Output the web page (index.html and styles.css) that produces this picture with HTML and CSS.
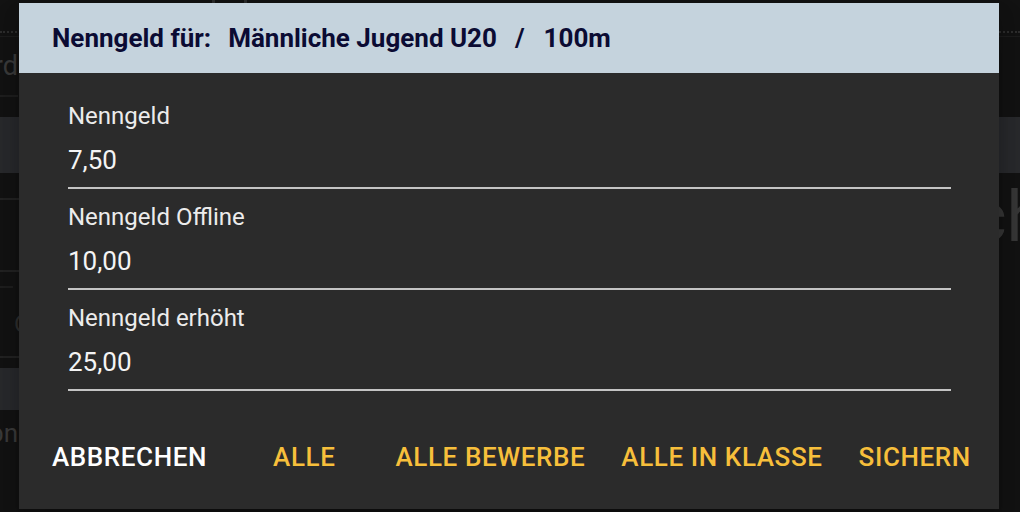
FILE: index.html
```html
<!DOCTYPE html>
<html lang="de">
<head>
  <meta charset="UTF-8">
  <meta name="viewport" content="width=device-width, initial-scale=1.0">
  <title>Nenngeld</title>
  <link rel="stylesheet" href="styles.css">
</head>
<body>
  <div class="page">
    <div class="topbar">
      <div class="topbar-item"></div>
      <div class="topbar-item sep"></div>
      <div class="topbar-item sep"></div>
    </div>
    <div class="search-row">
      <div class="search-text">Keyword</div>
    </div>
    <div class="band"></div>
    <div class="content">
      <div class="list">
        <div class="list-row first"></div>
        <div class="list-row"></div>
        <div class="list-row short"></div>
        <div class="list-row icon-row"><span class="row-icon">O</span></div>
        <div class="list-band"></div>
        <div class="list-text">Ergebn</div>
      </div>
      <div class="title-row">
        <div class="title">Übersicht</div>
      </div>
    </div>
  </div>

  <div class="dialog">
    <div class="dialog-title">
      <span>Nenngeld für:</span>
      <span class="title-part">Männliche Jugend U20</span>
      <span class="title-slash">/</span>
      <span>100m</span>
    </div>
    <form class="dialog-body">
      <div class="field">
        <label for="fee">Nenngeld</label>
        <input type="text" id="fee" value="7,50">
      </div>
      <div class="field">
        <label for="fee_offline">Nenngeld Offline</label>
        <input type="text" id="fee_offline" value="10,00">
      </div>
      <div class="field">
        <label for="fee_raised">Nenngeld erhöht</label>
        <input type="text" id="fee_raised" value="25,00">
      </div>
    </form>
    <div class="dialog-actions">
      <button type="button" class="btn btn-cancel">Abbrechen</button>
      <button type="button" class="btn btn-all">Alle</button>
      <button type="button" class="btn">Alle Bewerbe</button>
      <button type="button" class="btn">Alle in Klasse</button>
      <button type="button" class="btn">Sichern</button>
    </div>
  </div>
</body>
</html>
```

FILE: styles.css
```css
* { box-sizing: border-box; }
body { margin: 0; background: #121212; font-family: Roboto, 'Noto Sans', sans-serif; overflow: hidden; height: 512px; }

/* page behind the dialog */
.page { width: 100%; }
.topbar { height: 37px; display: flex; border-bottom: 1px solid #1c1c1c; position: relative; }
.topbar::after { content: ''; position: absolute; left: 0; right: 0; top: 31px; border-top: 2px dotted #2c2c2c; }
.topbar-item { width: 32px; }
.topbar-item:first-child { width: 212px; }
.topbar-item.sep { border-left: 3px solid #2a2a2a; height: 4px; }
.search-row { height: 60px; display: flex; justify-content: flex-end; border-bottom: 2px solid #1e1e1e; width: 18px; overflow: hidden; align-items: center; }
.search-text { font-size: 27px; color: #3a3a3a; white-space: nowrap; flex-shrink: 0; }
.band { height: 56px; margin-top: 20px; background: #28292c; }
.content { display: grid; grid-template-columns: 20px 1fr; }
.list-row { height: 72px; border-bottom: 2px solid #222; }
.list-row.first { height: 27px; }
.list-row.short { height: 16px; border-bottom-color: #1e1e1e; width: 13px; }
.list-row.icon-row { height: 70px; padding: 24px 0 0 14px; }
.row-icon { display: block; color: #2e2e2e; font-size: 24px; line-height: 24px; }
.list-band { height: 42px; margin-top: 10px; background: #28292c; }
.list-text { margin-top: 8px; font-size: 26px; line-height: 30px; color: #3a3a3a; white-space: nowrap; direction: rtl; width: 18px; overflow: hidden; }
.title-row { display: flex; justify-content: flex-end; margin-right: -48px; padding-top: 4px; overflow: hidden; }
.title { font-size: 70px; color: #363636; white-space: nowrap; line-height: 80px; }

/* dialog */
.dialog { position: absolute; left: 19px; top: 3px; width: 980px; height: 506px; background: #2b2b2b; display: flex; flex-direction: column; box-shadow: 0 11px 15px rgba(0,0,0,0.2), 0 24px 38px rgba(0,0,0,0.14); }
.dialog-title { height: 70px; background: #c5d3dd; color: #0b0b33; font-size: 26px; font-weight: 700; display: flex; align-items: center; padding-left: 33px; }
.title-part { margin-left: 17px; }
.title-slash { margin: 0 19px 0 18px; }
.dialog-body { padding: 29px 48px 0 49px; }
.field { margin-top: 14px; border-bottom: 2px solid #c4c4c4; padding-bottom: 5px; }
.field:first-child { margin-top: 0; }
label { display: block; font-size: 24px; line-height: 28px; color: #ececec; }
input { display: block; width: 100%; margin-top: 8px; height: 44px; padding: 0; border: none; background: transparent; color: #f4f4f4; font-family: Roboto, sans-serif; font-size: 26px; outline: none; }
.dialog-actions { margin-top: auto; padding: 0 0 34px 15px; display: flex; align-items: center; }
.btn { background: none; border: none; padding: 0 18px; height: 36px; font-family: Roboto, sans-serif; font-size: 26px; font-weight: 500; letter-spacing: 0.6px; text-transform: uppercase; color: #f7bf3b; cursor: pointer; }
.btn-cancel { color: #ffffff; margin-right: 30px; }
.btn-all { margin-right: 24px; }
```
